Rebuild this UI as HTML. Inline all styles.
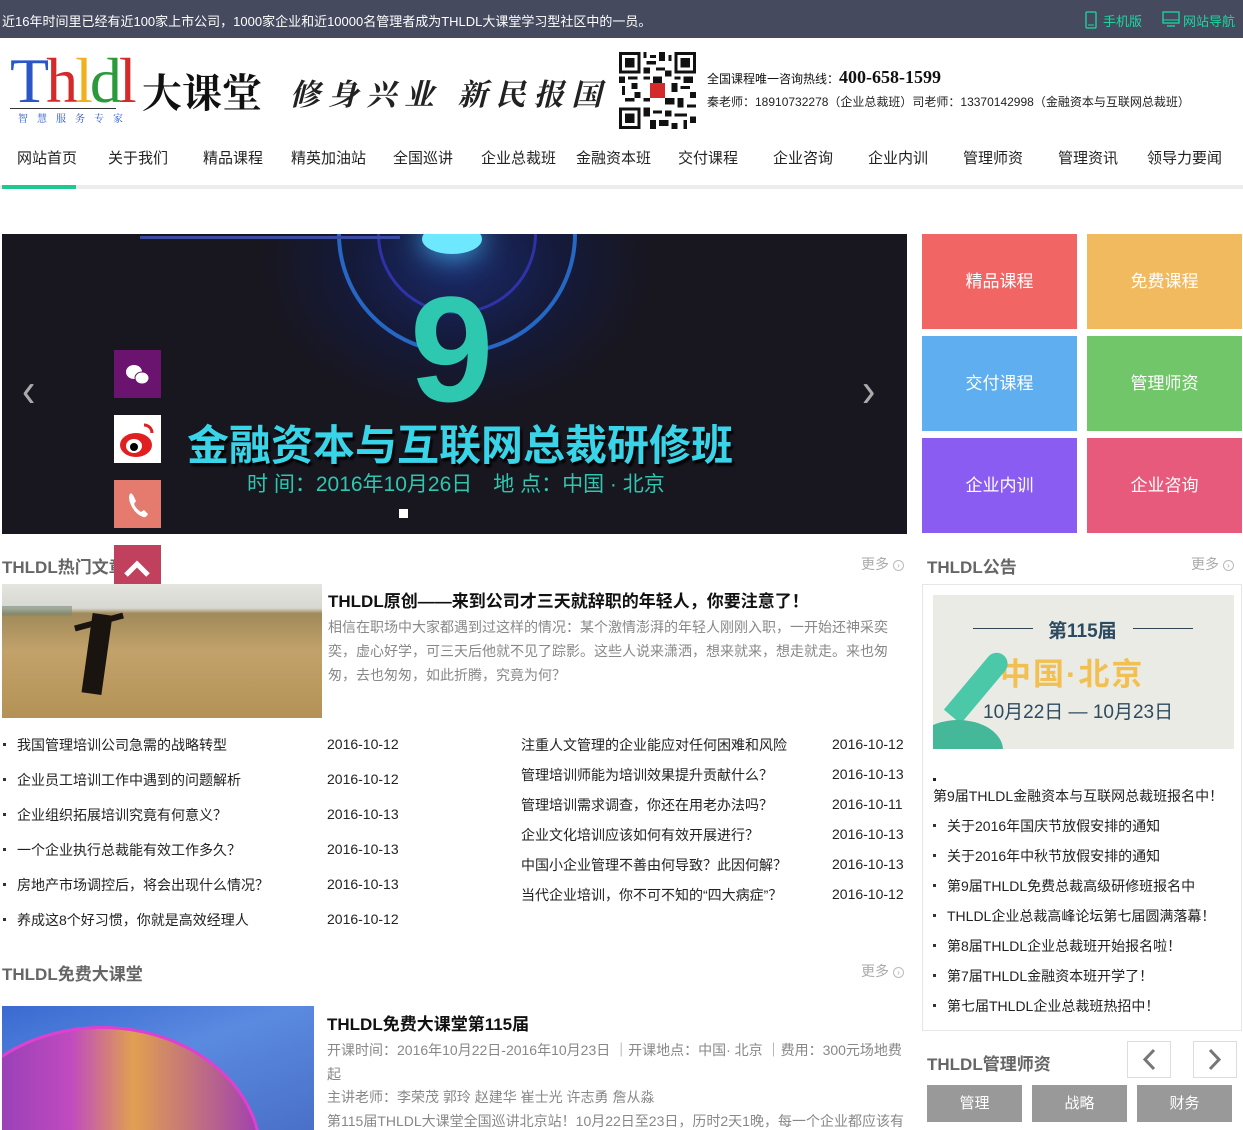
<!DOCTYPE html>
<html><head><meta charset="utf-8"><style>
*{margin:0;padding:0;box-sizing:border-box}
html,body{width:1243px;height:1130px;overflow:hidden}
body{background:#fff;font-family:"Liberation Sans","Noto Sans CJK SC",sans-serif;color:#333;position:relative}
.a{position:absolute;white-space:nowrap}
.top{left:0;top:0;width:1243px;height:38px;background:#454a5e}
.nav span{position:absolute;top:147px;font-size:15px;color:#222}
.tile{position:absolute;width:155px;height:95px;color:#fff;font-size:17px;text-align:center;line-height:95px}
.h{font-size:17px;font-weight:bold;color:#666}
.more{font-size:14px;color:#aaa}
.more i{display:inline-block;width:11px;height:11px;border:1px solid #bbb;border-radius:50%;font-style:normal;font-size:8px;line-height:9px;text-align:center;margin-left:4px;vertical-align:1px}
.li{font-size:14px;color:#222}
.li b{display:inline-block;width:3px;height:3px;background:#333;margin-right:11px;vertical-align:4px}
.dt{font-size:14px;color:#222}
.g{font-size:14px;color:#888}
.btn{position:absolute;top:1085px;width:95px;height:37px;background:#999;color:#fff;font-size:15px;text-align:center;line-height:37px}
</style></head><body>
<div class="a top"></div>
<div class="a" style="left:2px;top:11px;font-size:13px;color:#fff">近16年时间里已经有近100家上市公司，1000家企业和近10000名管理者成为THLDL大课堂学习型社区中的一员。</div>
<svg class="a" style="left:1085px;top:11px" width="12" height="18"><rect x="1" y="1" width="10" height="16" rx="1" fill="none" stroke="#1fd6a0" stroke-width="1.3"/><line x1="3" y1="14" x2="9" y2="14" stroke="#1fd6a0"/></svg>
<div class="a" style="left:1103px;top:11px;font-size:13px;color:#1fd6a0">手机版</div>
<svg class="a" style="left:1162px;top:11px" width="18" height="17"><rect x="1" y="1" width="16" height="11" fill="none" stroke="#1fd6a0" stroke-width="1.3"/><line x1="1" y1="9" x2="17" y2="9" stroke="#1fd6a0"/><line x1="5" y1="15" x2="13" y2="15" stroke="#1fd6a0" stroke-width="1.3"/></svg>
<div class="a" style="left:1183px;top:11px;font-size:13px;color:#1fd6a0">网站导航</div>

<!-- logo -->
<div class="a" style="left:10px;top:50px;font-family:'Liberation Serif',serif;font-size:64px;line-height:62px;letter-spacing:-3px"><span style="color:#2a56c6">T</span><span style="color:#d42a2a">h</span><span style="color:#f0b020">l</span><span style="color:#2a9a3a">d</span><span style="color:#d42a2a">l</span></div>
<div class="a" style="left:10px;top:108px;width:106px;height:1px;background:#333"></div>
<div class="a" style="left:18px;top:110px;font-size:10px;color:#2a56c6;letter-spacing:9px;font-family:'Noto Serif CJK SC',serif">智慧服务专家</div>
<div class="a" style="left:142px;top:66px;font-size:40px;font-weight:bold;color:#111;font-family:'Noto Serif CJK SC',serif;line-height:50px">大课堂</div>
<div class="a" style="left:290px;top:74px;font-size:30px;font-weight:bold;color:#222;font-family:'Noto Serif CJK SC',serif;letter-spacing:8px;line-height:36px;font-style:italic">修身兴业 新民报国</div>

<svg class="a" style="left:619px;top:52px" width="77" height="77" viewBox="0 0 25 25" shape-rendering="crispEdges">
<rect width="25" height="25" fill="#fff"/>
<g fill="#111">
<path d="M0 0h7v7H0zM18 0h7v7h-7zM0 18h7v7H0z"/>
<path d="M8 0h1v2H8zM10 1h2v1h-2zM13 0h2v3h-2zM16 1h1v2h-1zM9 3h3v1H9zM8 5h2v2H8zM12 5h3v1h-3zM15 6h2v2h-2zM0 8h2v2H0zM3 8h3v1H3zM8 8h2v1H8zM11 8h3v2h-3zM18 8h2v1h-2zM21 8h3v2h-3zM1 11h1v3H1zM4 10h2v2H4zM17 10h2v3h-2zM20 11h3v1h-3zM23 13h2v2h-2zM2 15h3v1H2zM5 13h2v2H5zM15 15h3v2h-3zM19 15h2v3h-2zM22 17h3v1h-3zM8 18h2v3H8zM11 19h3v1h-3zM15 19h2v2h-2zM18 20h4v1h-4zM10 22h2v3h-2zM13 22h3v2h-3zM17 23h2v2h-2zM21 22h1v3h-1zM23 21h2v2h-2zM8 15h2v1H8zM20 4h1v1h-1z"/>
</g>
<g fill="#fff"><path d="M1 1h5v5H1zM19 1h5v5h-5zM1 19h5v5H1z"/></g>
<g fill="#111"><path d="M2 2h3v3H2zM20 2h3v3h-3zM2 20h3v3H2z"/></g>
<rect x="10" y="10" width="5" height="5" fill="#d42a2a"/>
</svg>
<div class="a" style="left:707px;top:67px;font-size:12px;color:#111">全国课程唯一咨询热线：<span style="font-family:'Liberation Serif',serif;font-size:18px;font-weight:bold">400-658-1599</span></div>
<div class="a" style="left:707px;top:93px;font-size:12px;color:#222">秦老师：18910732278（企业总裁班）司老师：13370142998（金融资本与互联网总裁班）</div>

<div class="nav">
<span style="left:17px">网站首页</span><span style="left:108px">关于我们</span><span style="left:203px">精品课程</span><span style="left:291px">精英加油站</span><span style="left:393px">全国巡讲</span><span style="left:481px">企业总裁班</span><span style="left:576px">金融资本班</span><span style="left:678px">交付课程</span><span style="left:773px">企业咨询</span><span style="left:868px">企业内训</span><span style="left:963px">管理师资</span><span style="left:1058px">管理资讯</span><span style="left:1147px">领导力要闻</span>
</div>
<div class="a" style="left:0;top:185px;width:1243px;height:4px;background:#ececec"></div>
<div class="a" style="left:2px;top:185px;width:74px;height:4px;background:#1ec98e"></div>

<!-- banner -->
<div class="a" style="left:2px;top:234px;width:905px;height:300px;background:radial-gradient(ellipse 260px 200px at 455px 30px,#1a2a6a 0%,#151a3a 40%,#18161f 75%),#18161f;overflow:hidden">
<div style="position:absolute;left:335px;top:-120px;width:240px;height:240px;border-radius:50%;border:4px solid #2a7ae8;opacity:.8"></div>
<div style="position:absolute;left:375px;top:-80px;width:160px;height:160px;border-radius:50%;border:3px solid #3a3ad0;opacity:.7"></div>
<div style="position:absolute;left:138px;top:2px;width:260px;height:3px;background:#3a4aa0"></div>
<div style="position:absolute;left:420px;top:-10px;width:60px;height:30px;border-radius:50%;background:#6ee8ff;box-shadow:0 0 30px #4ac8ff"></div>
<div style="position:absolute;left:408px;top:40px;font-size:150px;font-weight:bold;color:#2ec8b0;line-height:150px;font-family:'Liberation Sans',sans-serif">9</div>
<div style="position:absolute;left:185px;top:178px;font-size:42px;font-weight:bold;color:#3ad4e8;letter-spacing:0px;text-shadow:2px 3px 2px #000">金融资本与互联网总裁研修班</div>
<div style="position:absolute;left:245px;top:234px;font-size:21px;color:#2fc6b0">时 间：2016年10月26日　地 点：中国 · 北京</div>
<div style="position:absolute;left:397px;top:275px;width:9px;height:9px;background:#fff"></div>
<div style="position:absolute;left:20px;top:135px;font-size:40px;color:#aaa;transform:scaleY(1.2)">&#8249;</div>
<div style="position:absolute;left:860px;top:135px;font-size:40px;color:#aaa;transform:scaleY(1.2)">&#8250;</div>
</div>
<div class="a" style="left:114px;top:350px;width:47px;height:48px;background:#6a1470"><svg width="47" height="48"><ellipse cx="20" cy="22" rx="8" ry="7" fill="#fff"/><ellipse cx="28" cy="28" rx="7" ry="6" fill="#fff" stroke="#6a1470"/></svg></div>
<div class="a" style="left:114px;top:415px;width:47px;height:48px;background:#fff"><svg width="47" height="48"><ellipse cx="22" cy="30" rx="16" ry="12" fill="#e02020"/><ellipse cx="20" cy="31" rx="8" ry="7" fill="#fff"/><circle cx="20" cy="32" r="4" fill="#000"/><path d="M30 10a8 8 0 0 1 8 8" stroke="#e02020" stroke-width="3" fill="none"/></svg></div>
<div class="a" style="left:114px;top:480px;width:47px;height:48px;background:#e57a6e"><svg width="47" height="48"><path d="M17 13q-4 3 0 12t12 12q3 1 5-3l-4-4-3 2q-5-3-7-8l2-3-3-6z" fill="#fff"/></svg></div>

<!-- tiles -->
<div class="tile" style="left:922px;top:234px;background:#f26565">精品课程</div>
<div class="tile" style="left:1087px;top:234px;background:#f2ba5e">免费课程</div>
<div class="tile" style="left:922px;top:336px;background:#5eaef0">交付课程</div>
<div class="tile" style="left:1087px;top:336px;background:#72c66a">管理师资</div>
<div class="tile" style="left:922px;top:438px;background:#8a5cf2">企业内训</div>
<div class="tile" style="left:1087px;top:438px;background:#e85a7c">企业咨询</div>

<!-- hot articles -->
<div class="a h" style="left:2px;top:553px">THLDL热门文章</div>
<div class="a" style="left:114px;top:545px;width:47px;height:48px;background:#c0405e"><svg width="47" height="48"><path d="M12 30l11-11 11 11" stroke="#fff" stroke-width="5" fill="none"/></svg></div>
<div class="a more" style="left:861px;top:554px">更多<i>&#8250;</i></div>
<div class="a" style="left:2px;top:584px;width:320px;height:134px;background:linear-gradient(#e4e4e0 0%,#d8d8d2 18%,#a08a5a 22%,#c2a26a 50%,#b49256 100%);overflow:hidden">
<div style="position:absolute;left:0;top:22px;width:70px;height:10px;background:#7a8a78;opacity:.6"></div>
<div style="position:absolute;left:85px;top:30px;width:20px;height:80px;background:#1a1410;transform:rotate(8deg)"></div>
<div style="position:absolute;left:72px;top:35px;width:50px;height:6px;background:#1a1410;transform:rotate(-15deg)"></div>
</div>
<div class="a" style="left:328px;top:587px;font-size:17px;font-weight:bold;color:#111">THLDL原创——来到公司才三天就辞职的年轻人，你要注意了！</div>
<div class="a g" style="left:328px;top:615px;width:565px;white-space:normal;line-height:24px">相信在职场中大家都遇到过这样的情况：某个激情澎湃的年轻人刚刚入职，一开始还神采奕奕，虚心好学，可三天后他就不见了踪影。这些人说来潇洒，想来就来，想走就走。来也匆匆，去也匆匆，如此折腾，究竟为何？</div>

<div class="a li" style="left:3px;top:735px"><b></b>我国管理培训公司急需的战略转型</div><div class="a dt" style="left:327px;top:736px">2016-10-12</div>
<div class="a li" style="left:3px;top:770px"><b></b>企业员工培训工作中遇到的问题解析</div><div class="a dt" style="left:327px;top:771px">2016-10-12</div>
<div class="a li" style="left:3px;top:805px"><b></b>企业组织拓展培训究竟有何意义？</div><div class="a dt" style="left:327px;top:806px">2016-10-13</div>
<div class="a li" style="left:3px;top:840px"><b></b>一个企业执行总裁能有效工作多久？</div><div class="a dt" style="left:327px;top:841px">2016-10-13</div>
<div class="a li" style="left:3px;top:875px"><b></b>房地产市场调控后，将会出现什么情况？</div><div class="a dt" style="left:327px;top:876px">2016-10-13</div>
<div class="a li" style="left:3px;top:910px"><b></b>养成这8个好习惯，你就是高效经理人</div><div class="a dt" style="left:327px;top:911px">2016-10-12</div>

<div class="a li" style="left:521px;top:735px">注重人文管理的企业能应对任何困难和风险</div><div class="a dt" style="left:832px;top:736px">2016-10-12</div>
<div class="a li" style="left:521px;top:765px">管理培训师能为培训效果提升贡献什么？</div><div class="a dt" style="left:832px;top:766px">2016-10-13</div>
<div class="a li" style="left:521px;top:795px">管理培训需求调查，你还在用老办法吗？</div><div class="a dt" style="left:832px;top:796px">2016-10-11</div>
<div class="a li" style="left:521px;top:825px">企业文化培训应该如何有效开展进行？</div><div class="a dt" style="left:832px;top:826px">2016-10-13</div>
<div class="a li" style="left:521px;top:855px">中国小企业管理不善由何导致？此因何解？</div><div class="a dt" style="left:832px;top:856px">2016-10-13</div>
<div class="a li" style="left:521px;top:885px">当代企业培训，你不可不知的“四大病症”？</div><div class="a dt" style="left:832px;top:886px">2016-10-12</div>

<!-- free class -->
<div class="a h" style="left:2px;top:960px">THLDL免费大课堂</div>
<div class="a more" style="left:861px;top:961px">更多<i>&#8250;</i></div>
<div class="a" style="left:2px;top:1006px;width:312px;height:124px;background:linear-gradient(160deg,#3a6ad0 0%,#5a8ae0 45%,#4a70c8 100%);overflow:hidden">
<div style="position:absolute;left:-60px;top:20px;width:320px;height:260px;border-radius:50%;background:linear-gradient(90deg,#7a3ab0,#c04ac0 40%,#e0a050 60%,#a040b0);border:3px solid #e040d0"></div>
</div>
<div class="a" style="left:327px;top:1010px;font-size:17px;font-weight:bold;color:#111">THLDL免费大课堂第115届</div>
<div class="a g" style="left:327px;top:1038px;width:575px;white-space:normal;line-height:24px">开课时间：2016年10月22日-2016年10月23日 ｜开课地点：中国· 北京 ｜费用：300元场地费起</div>
<div class="a g" style="left:327px;top:1087px">主讲老师：李荣茂 郭玲 赵建华 崔士光 许志勇 詹从淼</div>
<div class="a g" style="left:327px;top:1111px">第115届THLDL大课堂全国巡讲北京站！10月22日至23日，历时2天1晚，每一个企业都应该有</div>

<!-- notice -->
<div class="a h" style="left:927px;top:553px">THLDL公告</div>
<div class="a more" style="left:1191px;top:554px">更多<i>&#8250;</i></div>
<div class="a" style="left:922px;top:584px;width:320px;height:447px;border:1px solid #e6e6e6"></div>
<div class="a" style="left:933px;top:595px;width:301px;height:154px;background:#ebebe6;overflow:hidden">
<div style="position:absolute;left:40px;top:33px;width:60px;height:1px;background:#345"></div>
<div style="position:absolute;left:200px;top:33px;width:60px;height:1px;background:#345"></div>
<div style="position:absolute;left:115px;top:21px;font-size:19px;font-weight:bold;color:#2c4a60">第115届</div>
<div style="position:absolute;left:67px;top:54px;font-size:31px;font-weight:bold;color:#f2c050;letter-spacing:2px">中国·北京</div>
<div style="position:absolute;left:50px;top:102px;font-size:19px;color:#2c4a60">10月22日 — 10月23日</div>
<div style="position:absolute;left:5px;top:80px;width:80px;height:22px;background:#4ac8a8;transform:rotate(-50deg);border-radius:0 20px 20px 0"></div>
<div style="position:absolute;left:-20px;top:125px;width:90px;height:60px;border-radius:50%;background:#44b898"></div>
</div>
<div class="a" style="left:933px;top:778px;width:3px;height:3px;background:#222"></div>
<div class="a li" style="left:933px;top:786px">第9届THLDL金融资本与互联网总裁班报名中！</div>
<div class="a li" style="left:933px;top:816px"><b></b>关于2016年国庆节放假安排的通知</div>
<div class="a li" style="left:933px;top:846px"><b></b>关于2016年中秋节放假安排的通知</div>
<div class="a li" style="left:933px;top:876px"><b></b>第9届THLDL免费总裁高级研修班报名中</div>
<div class="a li" style="left:933px;top:906px"><b></b>THLDL企业总裁高峰论坛第七届圆满落幕！</div>
<div class="a li" style="left:933px;top:936px"><b></b>第8届THLDL企业总裁班开始报名啦！</div>
<div class="a li" style="left:933px;top:966px"><b></b>第7届THLDL金融资本班开学了！</div>
<div class="a li" style="left:933px;top:996px"><b></b>第七届THLDL企业总裁班热招中！</div>

<div class="a h" style="left:927px;top:1050px">THLDL管理师资</div>
<div class="a" style="left:1127px;top:1041px;width:44px;height:37px;border:1px solid #ddd"><svg width="42" height="35"><path d="M26 8l-9 9.5 9 9.5" stroke="#777" stroke-width="3" fill="none"/></svg></div>
<div class="a" style="left:1193px;top:1041px;width:44px;height:37px;border:1px solid #ddd"><svg width="42" height="35"><path d="M16 8l9 9.5-9 9.5" stroke="#777" stroke-width="3" fill="none"/></svg></div>
<div class="btn" style="left:927px">管理</div>
<div class="btn" style="left:1032px">战略</div>
<div class="btn" style="left:1137px">财务</div>
</body></html>
